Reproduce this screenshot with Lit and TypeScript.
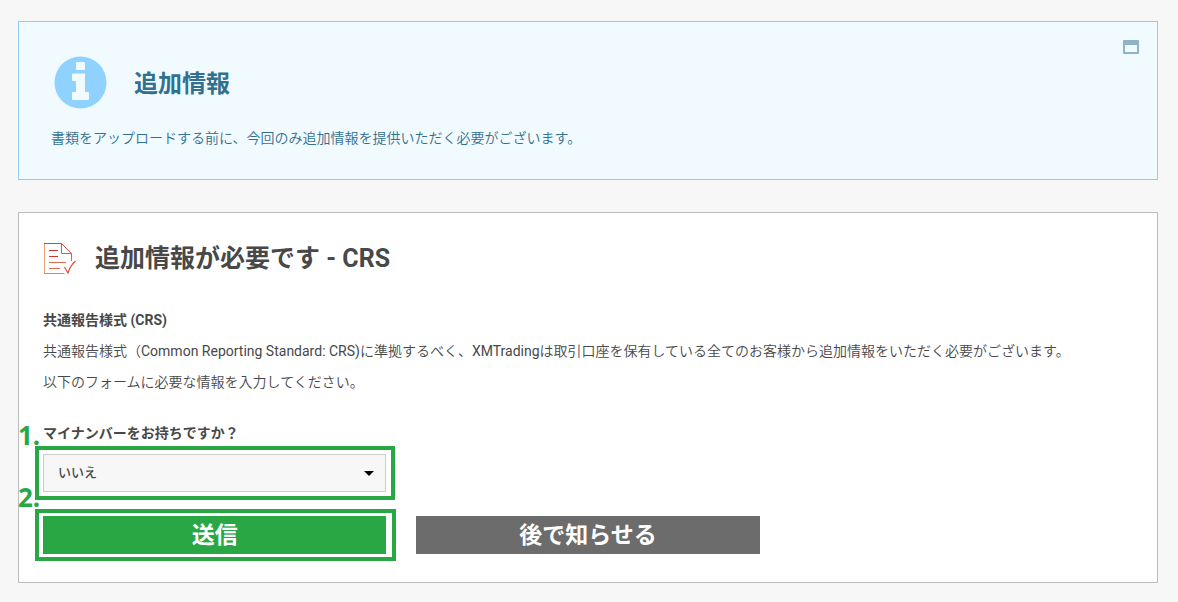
import { LitElement, html, css } from "lit";
import { customElement, state } from "lit/decorators.js";

@customElement("app-root")
export class AppRoot extends LitElement {
  static styles = css`
    :host {
      display: block;
      box-sizing: border-box;
      min-height: 100vh;
      padding: 21px 20px 19px 18px;
      background: #f7f7f7;
      color: #484848;
      font: 400 14px/21px Roboto, "Noto Sans CJK JP DemiLight", "Noto Sans CJK JP", sans-serif;
    }
    * {
      box-sizing: border-box;
    }
    h1,
    h2,
    h3,
    p {
      margin: 0;
    }
    h1,
    h2,
    h3,
    .label,
    select,
    .btn {
      font-family: Roboto, "Noto Sans CJK JP", sans-serif;
    }
    .notice {
      display: flex;
      align-items: flex-start;
      border: 1px solid #8fcdf8;
      background: #f1faff;
      color: #31708f;
      padding: 33px 18px 30px 32px;
    }
    .notice-body {
      flex: 1;
    }
    .notice-head {
      display: flex;
      align-items: center;
      gap: 27px;
      padding-left: 3px;
      margin-bottom: 17px;
    }
    .notice-head svg {
      display: block;
      width: 53px;
      height: 56px;
    }
    .notice h1 {
      font-size: 24px;
      line-height: 36px;
      font-weight: 700;
      padding-top: 2px;
    }
    .collapse {
      border: 0;
      padding: 0;
      margin-top: -15px;
      background: none;
      cursor: pointer;
    }
    .collapse svg {
      display: block;
    }
    .card {
      margin-top: 32px;
      padding: 24px 24px 28px;
      border: 1px solid #bcbcbc;
      background: #fff;
    }
    .card-head {
      display: flex;
      align-items: center;
      gap: 18px;
      margin-bottom: 29px;
    }
    .card-head h2 {
      font-size: 25px;
      line-height: 44px;
      font-weight: 700;
    }
    h3,
    .label {
      font-size: 14px;
      line-height: 21px;
      font-weight: 700;
    }
    .text p,
    .text h3 {
      margin-bottom: 10px;
    }
    .label {
      display: block;
      margin-top: 30px;
      margin-bottom: 10px;
    }
    .row {
      display: grid;
      grid-template-columns: repeat(3, 1fr);
      column-gap: 30px;
    }
    .actions {
      margin-top: 24px;
    }
    .field {
      position: relative;
    }
    select,
    .btn {
      display: block;
      width: 100%;
      height: 38px;
      margin: 0;
      border-radius: 0;
    }
    select {
      appearance: none;
      border: 1px solid #ccc;
      background: #f7f7f7;
      color: #484848;
      padding: 0 32px 2px 14px;
      font-size: 13px;
      font-weight: 500;
    }
    .caret {
      position: absolute;
      right: 12px;
      top: 17px;
      pointer-events: none;
    }
    .btn {
      border: 0;
      padding: 1px 0 0;
      color: #fff;
      font-size: 23px;
      line-height: 37px;
      font-weight: 700;
      cursor: pointer;
    }
    .submit {
      background: #2aa745;
    }
    .later {
      background: #6c6c6c;
    }
    .frame {
      position: absolute;
      inset: -8px -9px -8px -8px;
      border: 4px solid #2aa745;
      pointer-events: none;
    }
    .actions .frame {
      inset: -7px -10px -7px -8px;
    }
    .step {
      position: absolute;
      left: -25px;
      bottom: 100%;
      margin-bottom: 1px;
      color: #2aa745;
      font: 700 26px/36px "Noto Sans", sans-serif;
    }
  `;

  @state() private answer = "no";

  render() {
    return html`
      <section class="notice">
        <div class="notice-body">
          <div class="notice-head">
            <svg viewBox="0 0 53 56" aria-hidden="true">
              <circle cx="26.5" cy="27.5" r="26" fill="#90d2ff" />
              <path
                d="M23 7h7q1 0 1 1v6q0 1-1 1h-7q-1 0-1-1V8q0-1 1-1zM19 18.500h11q1 0 1 1V37h3q1 0 1 1v6q0 1-1 1H19q-1 0-1-1v-6q0-1 1-1h3V26h-3q-1 0-1-1v-5.500q0-1 1-1z"
                fill="#f1faff"
              />
            </svg>
            <h1>追加情報</h1>
          </div>
          <p>書類をアップロードする前に、今回のみ追加情報を提供いただく必要がございます。</p>
        </div>
        <button class="collapse" type="button" aria-label="閉じる">
          <svg width="16" height="14" viewBox="0 0 16 14">
            <path
              d="M1 0h14q1 0 1 1v12q0 1-1 1H1q-1 0-1-1V1q0-1 1-1zM2 5v7h12V5z"
              fill="#8fb4c8"
              fill-rule="evenodd"
            />
          </svg>
        </button>
      </section>

      <section class="card">
        <div class="card-head">
          <svg width="34" height="34" viewBox="0 0 34 34" fill="none" aria-hidden="true">
            <defs>
              <linearGradient id="paper" x1="0" y1="0" x2="0" y2="1">
                <stop offset="0" stop-color="#e0413f" />
                <stop offset="1" stop-color="#e3825a" />
              </linearGradient>
            </defs>
            <path d="M1.500 1v31" stroke="#ec9c74" />
            <path d="M1 1.500h17.500l10 10V19M18.500 1.500v10h10M1 31.500h20.500" stroke="url(#paper)" />
            <path d="M6 8.500h9M6 14.500h9" stroke="#d8302f" />
            <path d="M6 20.500h17M6 26.500h11" stroke="#dd6a55" />
            <path d="M21.500 25l3.500 6c1.500-5 4-9 7.500-12" stroke="#d9503c" stroke-width="1.200" />
          </svg>
          <h2>追加情報が必要です - CRS</h2>
        </div>
        <div class="text">
          <h3>共通報告様式 (CRS)</h3>
          <p>
            共通報告様式（Common Reporting Standard: CRS)に準拠するべく、XMTradingは取引口座を保有している全てのお客様から追加情報をいただく必要がございます。
          </p>
          <p>以下のフォームに必要な情報を入力してください。</p>
        </div>
        <form @submit=${(e: Event) => e.preventDefault()}>
          <label class="label" for="my-number">マイナンバーをお持ちですか？</label>
          <div class="row">
            <div class="field">
              <select
                id="my-number"
                .value=${this.answer}
                @change=${(e: Event) => (this.answer = (e.target as HTMLSelectElement).value)}
              >
                <option value="no">いいえ</option>
                <option value="yes">はい</option>
              </select>
              <svg class="caret" width="10" height="5" viewBox="0 0 10 5" aria-hidden="true">
                <path d="M0 0h10L5 5z" fill="#000" />
              </svg>
              <span class="frame"></span>
              <span class="step">1.</span>
            </div>
          </div>
          <div class="row actions">
            <div class="field">
              <button class="btn submit" type="submit">送信</button>
              <span class="frame"></span>
              <span class="step">2.</span>
            </div>
            <button class="btn later" type="button">後で知らせる</button>
          </div>
        </form>
      </section>
    `;
  }
}
